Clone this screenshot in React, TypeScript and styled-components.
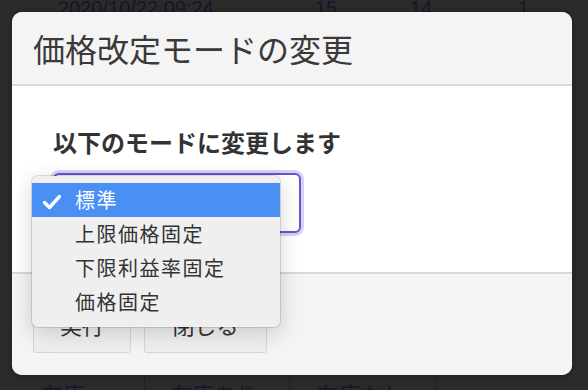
import React from "react";
import styled, { createGlobalStyle } from "styled-components";

const GlobalStyle = createGlobalStyle`
  html, body {
    margin: 0;
    padding: 0;
    background: #2b2b2b;
    overflow: hidden;
  }
  body {
    font-family: "Noto Sans CJK JP", "Noto Sans", sans-serif;
  }
`;

const Page = styled.div`
  width: 588px;
  height: 390px;
  display: flex;
  flex-direction: column;
  justify-content: space-between;
  background: #2b2b2b;
  color: #17172a;
  overflow: hidden;
`;

const TopRow = styled.div`
  display: grid;
  grid-template-columns: 58px 257px 95px 108px 1fr;
  margin-top: -2px;
  font-family: "Liberation Sans", Arial, sans-serif;
  font-size: 20px;
  line-height: 20px;
  color: #16162c;
`;

const BottomRow = styled.div`
  display: grid;
  grid-template-columns: 145px 145px 147px 1fr;
  height: 14px;
  font-size: 22px;
  line-height: 30px;
  color: #16162c;
`;

const BottomCell = styled.div<{ $indent: number; $last?: boolean }>`
  padding-left: ${(p) => p.$indent}px;
  padding-top: 2px;
  border-right: ${(p) => (p.$last ? "none" : "1px solid #222222")};
  white-space: nowrap;
`;

const Cell = styled.div`
  white-space: nowrap;
`;

const Modal = styled.div`
  position: fixed;
  left: 12px;
  top: 12px;
  width: 560px;
  height: 363px;
  display: flex;
  flex-direction: column;
  border-radius: 10px;
  background: #f4f4f4;
  box-shadow: 0 2px 10px rgba(0, 0, 0, 0.25);
`;

const Header = styled.div`
  height: 72px;
  display: flex;
  align-items: center;
  padding: 0 21px;
  background: #f4f4f4;
  border-bottom: 2px solid #d9d9d9;
  border-radius: 10px 10px 0 0;
`;

const Title = styled.h1`
  margin: 0;
  font-size: 32px;
  font-weight: 400;
  line-height: 40px;
  color: #3a3a3a;
`;

const Body = styled.div`
  height: 188px;
  box-sizing: border-box;
  padding: 38px 41px 0;
  background: #ffffff;
  border-bottom: 2px solid #d9d9d9;
  display: flex;
  flex-direction: column;
  gap: 13px;
`;

const Lead = styled.p`
  margin: 0;
  font-size: 24px;
  font-weight: 700;
  line-height: 36px;
  color: #333333;
`;

const SelectBox = styled.div`
  position: relative;
  width: 248px;
  height: 60px;
  box-sizing: border-box;
  border: 2px solid #6e4fd1;
  border-radius: 6px;
  background: #ffffff;
  box-shadow: 0 0 0 3px rgba(120, 90, 215, 0.28);
`;

const Menu = styled.ul`
  position: absolute;
  left: -23px;
  top: 1px;
  width: 248px;
  height: 151px;
  box-sizing: border-box;
  margin: 0;
  padding: 7px 0 8px;
  list-style: none;
  background: #efefef;
  border-radius: 6px;
  box-shadow: 0 0 0 1px rgba(0, 0, 0, 0.12), 0 6px 22px rgba(0, 0, 0, 0.18);
  z-index: 2;
`;

const MenuItem = styled.li<{ $selected?: boolean }>`
  height: 34px;
  display: flex;
  align-items: center;
  padding-left: 10px;
  background: ${(p) => (p.$selected ? "#4a90f4" : "transparent")};
  color: ${(p) => (p.$selected ? "#ffffff" : "#333333")};
  font-size: 20px;
  letter-spacing: 1.5px;
  line-height: 34px;
`;

const CheckSlot = styled.span`
  width: 33px;
  height: 34px;
  display: flex;
  align-items: center;
  padding-top: 3px;
  box-sizing: border-box;
`;

const Footer = styled.div`
  flex: 1;
  display: flex;
  align-items: flex-start;
  gap: 13px;
  padding: 20px 21px;
  background: #f4f4f4;
  border-radius: 0 0 10px 10px;
`;

const Button = styled.button<{ $width: number }>`
  width: ${(p) => p.$width}px;
  height: 59px;
  border: 1px solid #d6d6d6;
  border-radius: 3px;
  background: linear-gradient(#fbfbfb, #eeeeee);
  font-family: "Noto Sans CJK JP", sans-serif;
  font-size: 22px;
  color: #333333;
  padding: 0;
`;

const Check = () => (
  <svg width="20" height="16" viewBox="0 0 20 16">
    <polyline
      points="2.5,8.5 7.5,13.5 17.5,2.5"
      fill="none"
      stroke="#ffffff"
      strokeWidth="3.4"
      strokeLinecap="round"
      strokeLinejoin="round"
    />
  </svg>
);

const options = ["標準", "上限価格固定", "下限利益率固定", "価格固定"];

export default function App() {
  return (
    <>
      <GlobalStyle />
      <Page>
        <TopRow>
          <Cell />
          <Cell>2020/10/22 09:24</Cell>
          <Cell>15</Cell>
          <Cell>14</Cell>
          <Cell>1</Cell>
        </TopRow>
        <BottomRow>
          <BottomCell $indent={41}>在庫</BottomCell>
          <BottomCell $indent={25}>在庫あり</BottomCell>
          <BottomCell $indent={27}>在庫なし</BottomCell>
          <BottomCell $indent={0} $last />
        </BottomRow>
      </Page>
      <Modal>
        <Header>
          <Title>価格改定モードの変更</Title>
        </Header>
        <Body>
          <Lead>以下のモードに変更します</Lead>
          <SelectBox>
            <Menu>
              {options.map((o, i) => (
                <MenuItem key={o} $selected={i === 0}>
                  <CheckSlot>{i === 0 ? <Check /> : null}</CheckSlot>
                  {o}
                </MenuItem>
              ))}
            </Menu>
          </SelectBox>
        </Body>
        <Footer>
          <Button $width={98}>実行</Button>
          <Button $width={123}>閉じる</Button>
        </Footer>
      </Modal>
    </>
  );
}
